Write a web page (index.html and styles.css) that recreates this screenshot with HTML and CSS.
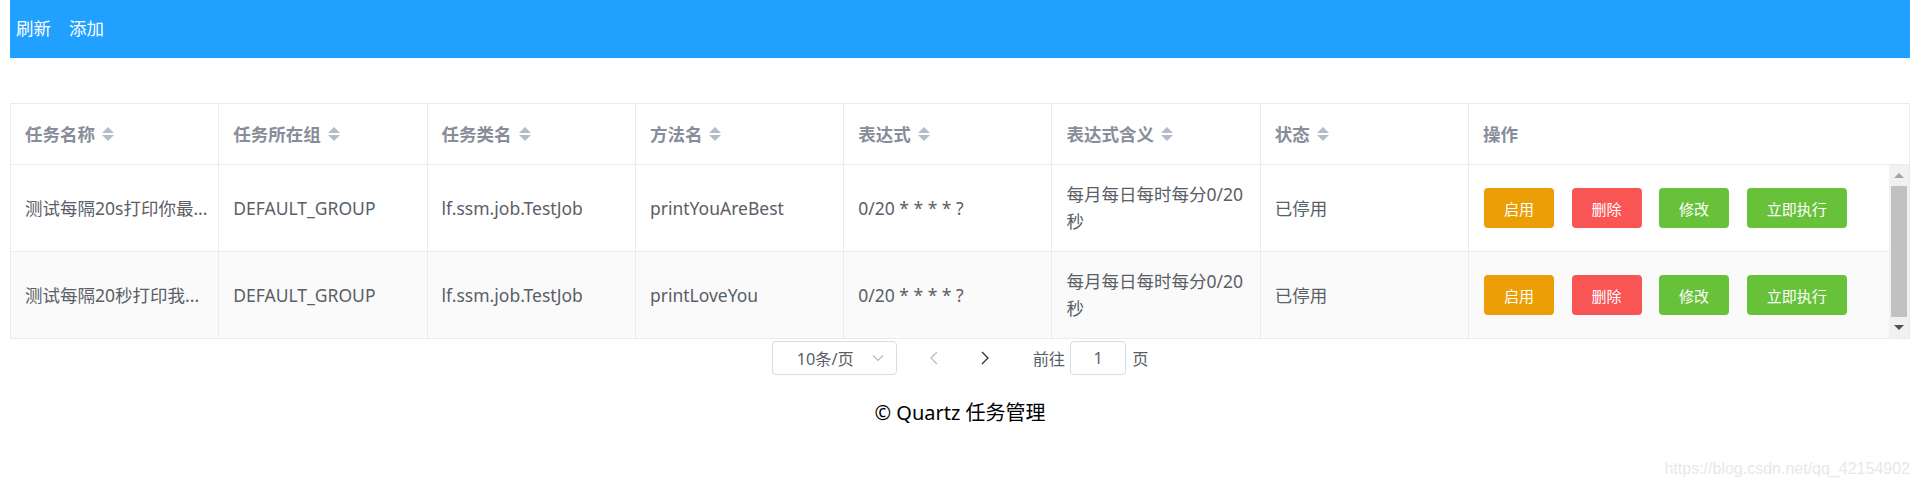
FILE: index.html
```html
<!DOCTYPE html>
<html lang="zh-CN">
  <head>
    <meta charset="UTF-8" />
    <meta name="viewport" content="width=device-width, initial-scale=1.0" />
    <title>Quartz 任务管理</title>
    <link rel="stylesheet" href="styles.css">
  </head>
  <body>
    <header class="topbar">
      <a>刷新</a>
      <a>添加</a>
    </header>

    <div class="job-table">
      <div class="table-head">
        <div class="th">任务名称<span class="sort-caret"><i class="caret-up"></i><i class="caret-down"></i></span></div>
        <div class="th">任务所在组<span class="sort-caret"><i class="caret-up"></i><i class="caret-down"></i></span></div>
        <div class="th">任务类名<span class="sort-caret"><i class="caret-up"></i><i class="caret-down"></i></span></div>
        <div class="th">方法名<span class="sort-caret"><i class="caret-up"></i><i class="caret-down"></i></span></div>
        <div class="th">表达式<span class="sort-caret"><i class="caret-up"></i><i class="caret-down"></i></span></div>
        <div class="th">表达式含义<span class="sort-caret"><i class="caret-up"></i><i class="caret-down"></i></span></div>
        <div class="th">状态<span class="sort-caret"><i class="caret-up"></i><i class="caret-down"></i></span></div>
        <div class="th">操作</div>
      </div>
      <div class="table-body">
        <div class="rows">
          <div class="table-row">
            <div class="td"><span class="ellipsis">测试每隔20s打印你最...</span></div>
            <div class="td">DEFAULT_GROUP</div>
            <div class="td">lf.ssm.job.TestJob</div>
            <div class="td">printYouAreBest</div>
            <div class="td">0/20 * * * * ?</div>
            <div class="td">每月每日每时每分0/20秒</div>
            <div class="td">已停用</div>
            <div class="td actions">
              <button class="btn btn-warning">启用</button>
              <button class="btn btn-danger">删除</button>
              <button class="btn btn-success">修改</button>
              <button class="btn btn-success">立即执行</button>
            </div>
          </div>
          <div class="table-row striped">
            <div class="td"><span class="ellipsis">测试每隔20秒打印我...</span></div>
            <div class="td">DEFAULT_GROUP</div>
            <div class="td">lf.ssm.job.TestJob</div>
            <div class="td">printLoveYou</div>
            <div class="td">0/20 * * * * ?</div>
            <div class="td">每月每日每时每分0/20秒</div>
            <div class="td">已停用</div>
            <div class="td actions">
              <button class="btn btn-warning">启用</button>
              <button class="btn btn-danger">删除</button>
              <button class="btn btn-success">修改</button>
              <button class="btn btn-success">立即执行</button>
            </div>
          </div>
        </div>
        <div class="scrollbar">
          <span class="scroll-arrow"><i class="arrow-up"></i></span>
          <span class="scroll-thumb"></span>
          <span class="scroll-arrow"><i class="arrow-down"></i></span>
        </div>
      </div>
    </div>

    <div class="pager">
      <div class="page-size">
        <span>10条/页</span>
        <svg width="12" height="8" viewBox="0 0 12 8"><polyline points="1,1.5 6,6.5 11,1.5" fill="none" stroke="#b4bccc" stroke-width="1.2"/></svg>
      </div>
      <span class="page-btn prev">
        <svg width="8" height="14" viewBox="0 0 8 14"><polyline points="7,1 1,7 7,13" fill="none" stroke="#b4bccc" stroke-width="1.3"/></svg>
      </span>
      <span class="page-btn next">
        <svg width="8" height="14" viewBox="0 0 8 14"><polyline points="1,1 7,7 1,13" fill="none" stroke="#2d2f33" stroke-width="1.3"/></svg>
      </span>
      <span class="page-jump">前往</span>
      <span class="page-input">1</span>
      <span>页</span>
    </div>

    <p class="copyright">© Quartz 任务管理</p>
    <p class="watermark">https://blog.csdn.net/qq_42154902</p>
  </body>
</html>
```

FILE: styles.css
```css
body {
  margin: 0 10px;
  font-family: "Noto Sans", "Noto Sans CJK SC", sans-serif;
  font-size: 17.5px;
  color: #5a5e66;
}
.topbar {
  display: flex;
  align-items: center;
  gap: 18px;
  height: 58px;
  padding: 0 6px 3px;
  box-sizing: border-box;
  background-color: #20a0ff;
}
.topbar a {
  color: #fff;
  cursor: pointer;
}
.job-table {
  margin-top: 45px;
  border: 1px solid #e6ebf5;
}
.table-head,
.table-row {
  display: grid;
  grid-template-columns: repeat(7, 208.3px) 1fr;
}
.table-head {
  height: 60px;
  border-bottom: 1px solid #e6ebf5;
}
.th,
.td {
  display: flex;
  align-items: center;
  min-width: 0;
  padding: 0 14px;
  border-right: 1px solid #e6ebf5;
  line-height: 27px;
}
.th:last-child,
.td:last-child {
  border-right: none;
}
.th {
  font-weight: bold;
  color: #878d99;
}
.sort-caret {
  display: inline-flex;
  flex-direction: column;
  gap: 2px;
  margin-left: 7px;
}
.sort-caret i {
  display: block;
  width: 0;
  height: 0;
  border-left: 6px solid transparent;
  border-right: 6px solid transparent;
}
.caret-up {
  border-bottom: 6px solid #b4bccc;
}
.caret-down {
  border-top: 6px solid #b4bccc;
}
.table-body {
  display: flex;
}
.rows {
  flex: 1;
}
.table-row {
  height: 86px;
  border-bottom: 1px solid #e6ebf5;
}
.table-row:last-child {
  border-bottom: none;
}
.striped {
  background-color: #fafafa;
}
.ellipsis {
  white-space: nowrap;
}
.actions {
  gap: 17.5px;
  padding-left: 15px;
}
.btn {
  height: 40px;
  padding: 0 20px;
  border: none;
  border-radius: 4px;
  color: #fff;
  font-family: inherit;
  font-size: 15px;
  cursor: pointer;
}
.btn-warning {
  background-color: #eb9e05;
}
.btn-danger {
  background-color: #fa5555;
}
.btn-success {
  background-color: #67c23a;
}
.scrollbar {
  display: flex;
  flex-direction: column;
  width: 20px;
  background-color: #f1f1f1;
}
.scroll-arrow {
  display: flex;
  align-items: center;
  justify-content: center;
  height: 21px;
}
.scroll-arrow i {
  width: 0;
  height: 0;
  border-left: 5px solid transparent;
  border-right: 5px solid transparent;
}
.arrow-up {
  border-bottom: 5px solid #a3a3a3;
}
.arrow-down {
  border-top: 5px solid #505050;
}
.scroll-thumb {
  flex: 1;
  margin: 0 2px;
  background-color: #c1c1c1;
}
.pager {
  display: flex;
  justify-content: center;
  align-items: center;
  height: 34px;
  margin-top: 2px;
  font-size: 16.25px;
}
.page-size {
  display: flex;
  align-items: center;
  justify-content: space-between;
  width: 125px;
  height: 34px;
  box-sizing: border-box;
  padding: 0 12px 0 24px;
  border: 1px solid #d8dce5;
  border-radius: 4px;
}
.page-btn {
  display: flex;
  align-items: center;
  justify-content: center;
  width: 44px;
  height: 34px;
}
.prev {
  margin-left: 15px;
}
.next {
  margin-left: 7px;
}
.page-jump {
  margin-left: 26px;
}
.page-input {
  display: flex;
  align-items: center;
  justify-content: center;
  width: 56px;
  height: 34px;
  box-sizing: border-box;
  margin: 0 6px 0 5px;
  border: 1px solid #d8dce5;
  border-radius: 4px;
}
.copyright {
  margin: 26px 0 0;
  text-align: center;
  font-size: 20px;
  line-height: 24px;
  color: #000;
}
.watermark {
  margin: 35px 0 0;
  text-align: right;
  font-family: "Liberation Sans", Arial, sans-serif;
  font-size: 16px;
  line-height: 18px;
  color: #e8e8e8;
}
```
